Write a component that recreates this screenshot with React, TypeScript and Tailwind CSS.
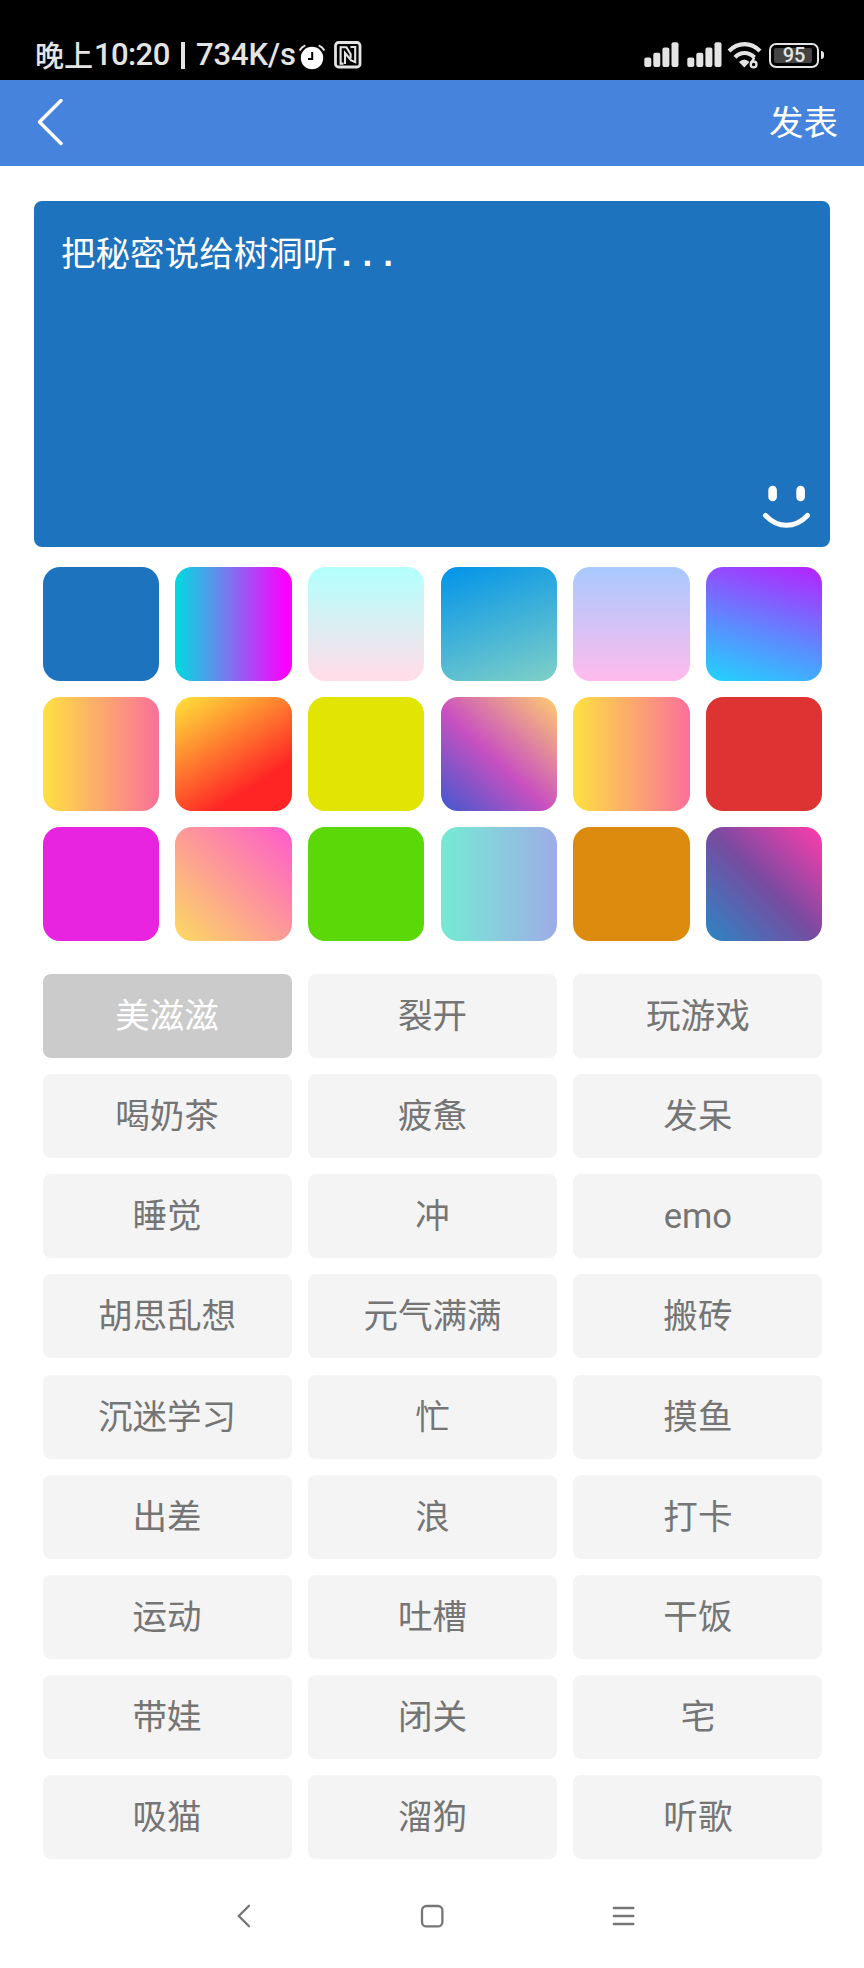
const SWATCHES = [
  "bg-[#1e73be]",
  "bg-[linear-gradient(90deg,#00dbde_0%,#5894ea_33%,#fc00ff_95%)]",
  "bg-[linear-gradient(180deg,#b5fffc_5%,#ffdee9_95%)]",
  "bg-[linear-gradient(160deg,#0093e9_0%,#80d0c7_100%)]",
  "bg-[linear-gradient(180deg,#a9c9ff_0%,#ffbbec_100%)]",
  "bg-[linear-gradient(17deg,#21d4fd_0%,#5b8cff_42%,#b721ff_100%)]",
  "bg-[linear-gradient(90deg,#fee140_0%,#fa709a_100%)]",
  "bg-[linear-gradient(147deg,#ffe53b_0%,#ff2525_74%)]",
  "bg-[#e2e402]",
  "bg-[linear-gradient(43deg,#4158d0_0%,#c850c0_46%,#ffcc70_100%)]",
  "bg-[linear-gradient(90deg,#fee140_0%,#fa709a_100%)]",
  "bg-[#de3333]",
  "bg-[#e924e1]",
  "bg-[linear-gradient(225deg,#ff5acd_0%,#fbda61_100%)]",
  "bg-[#5bd808]",
  "bg-[linear-gradient(90deg,#74ebd5_0%,#9face6_100%)]",
  "bg-[#dc8b0e]",
  "bg-[linear-gradient(225deg,#ff3cac_0%,#784ba0_50%,#2b86c5_100%)]",
];

const TAGS = [
  "美滋滋", "裂开", "玩游戏",
  "喝奶茶", "疲惫", "发呆",
  "睡觉", "冲", "emo",
  "胡思乱想", "元气满满", "搬砖",
  "沉迷学习", "忙", "摸鱼",
  "出差", "浪", "打卡",
  "运动", "吐槽", "干饭",
  "带娃", "闭关", "宅",
  "吸猫", "溜狗", "听歌",
];

function Signal() {
  return (
    <svg className="h-[26px] w-[36px]" viewBox="0 0 36 26" fill="#e4e4e4">
      <rect x="0.3" y="15.5" width="7" height="9.5" rx="2" />
      <rect x="9.3" y="10.8" width="7" height="14.2" rx="2" />
      <rect x="18.4" y="5.6" width="7" height="19.4" rx="2" />
      <rect x="27.5" y="0.3" width="7" height="24.7" rx="2" />
    </svg>
  );
}

function StatusBar() {
  return (
    <div className="flex h-20 items-start justify-between bg-black pt-[40px] pr-[40px] pl-[35px] text-[#e4e4e4]">
      <div className="flex h-[30px] items-center whitespace-pre leading-[30px]">
        <span className="w-[59px] pb-[2px] font-['Noto_Sans_CJK_SC',sans-serif] text-[29px] leading-[28px] font-medium">晚上</span>
        <span className="w-[87px] font-[Roboto,sans-serif] text-[31px] font-medium tracking-[-0.6px]">10:20</span>
        <span className="mr-[11.5px] h-[27px] w-[3.5px] bg-[#e4e4e4]" />
        <span className="w-[103px] font-[Roboto,sans-serif] text-[31px] font-medium tracking-[-0.1px]">734K/s</span>
        <svg className="mt-[3px] h-[26px] w-[26px]" viewBox="0 0 26 26" fill="none">
          <circle cx="13" cy="14" r="11.2" fill="#fff" />
          <path d="M1.2 5.8Q2.6 3 5.5 1.8M20.5 1.8Q23.4 3 24.8 5.8" stroke="#e4e4e4" strokeWidth="2" strokeLinecap="round" />
          <path d="M13.2 8v7H9" stroke="#000" strokeWidth="2" />
        </svg>
        <svg className="ml-[9px] h-[28px] w-[28px]" viewBox="0 0 28 28" fill="none" stroke="#e4e4e4">
          <rect x="1.5" y="1.5" width="24.5" height="24.5" rx="3" strokeWidth="2.8" />
          <path d="M9.5 22.6H6.6V6.2H12.4L16.6 13V17.2" strokeWidth="2.1" />
          <path d="M16.5 6H21.2V21.2L17.2 19.5L11 12V23" strokeWidth="2.1" />
        </svg>
      </div>
      <div className="flex h-[30px] items-center">
        <Signal />
        <span className="w-[7px]" />
        <Signal />
        <svg className="ml-[4px] h-[30px] w-[36px]" viewBox="0 0 36 30" fill="none" stroke="#e4e4e4">
          <path d="M2 11Q9 4.2 17.5 4.2Q26 4.2 33 11" strokeWidth="4.2" />
          <path d="M8 17.4Q12 13 17.5 13Q23 13 27.5 17.4" strokeWidth="4.2" />
          <path d="M12 22Q17.3 17 22.5 22L17.3 27.4Z" fill="#e4e4e4" stroke="none" />
          <circle cx="26.6" cy="24.4" r="4.8" fill="#000" stroke="none" />
          <circle cx="26.6" cy="24.4" r="2.9" strokeWidth="2.3" />
          <path d="M23.9 23.2L27.4 17.6" strokeWidth="2.3" />
        </svg>
        <div className="ml-[6px] flex h-[25px] w-[50px] items-center justify-center rounded-[7px] border-2 border-[#e4e4e4] p-[3px]">
          <div className="relative flex h-[15px] w-full items-center justify-center">
            <div className="absolute inset-y-0 left-0 w-[38px] rounded-[2px] bg-[#444]" />
            <span className="relative font-[Roboto,sans-serif] text-[20px] leading-none font-medium">95</span>
          </div>
        </div>
        <span className="ml-[2px] h-2 w-[3px] rounded-r bg-[#e4e4e4]" />
      </div>
    </div>
  );
}

export default function App() {
  return (
    <div className="flex h-[1968px] w-[864px] flex-col bg-white font-[Roboto,'Noto_Sans_CJK_SC',sans-serif] text-[34.56px]">
      <StatusBar />
      <header className="flex h-[86px] items-center justify-between bg-[#4583dc] pr-[26px] pl-[36px] text-white">
        <svg className="h-[48px] w-[28px]" viewBox="0 0 28 48" fill="none" stroke="#fff" strokeWidth="3.4" strokeLinecap="round" strokeLinejoin="round">
          <path d="M25 1.5L3.5 23L25 44.5" />
        </svg>
        <button className="leading-[50px]">发表</button>
      </header>

      <main className="flex flex-col pr-[33.4px] pl-[34.4px] pt-[35px]">
        <section className="flex h-[346px] w-[796px] flex-col justify-between rounded-[8px] bg-[#1e73be] pt-[27px] pr-[20px] pb-[18px] pl-[26.6px] text-white">
          <p className="font-['DejaVu_Sans_Mono','Noto_Sans_CJK_SC',monospace] leading-[52px] whitespace-nowrap">
            把秘密说给树洞听<span className="relative -left-px font-['Liberation_Mono',monospace] font-bold">...</span>
          </p>
          <svg className="h-[46px] w-[48px] self-end" viewBox="0 0 48 46" fill="none">
            <rect x="6.3" y="2.7" width="8.6" height="15.6" rx="4.3" fill="#fff" />
            <rect x="34.3" y="2.7" width="8.6" height="15.6" rx="4.3" fill="#fff" />
            <path d="M3.5 32.5Q13 42.3 24.4 42.3Q36 42.3 45.5 32.5" stroke="#fff" strokeWidth="5" strokeLinecap="round" />
          </svg>
        </section>

        <section className="mx-[8.2px] mt-[20px] grid grid-cols-6 gap-[16.4px]">
          {SWATCHES.map((fill, i) => (
            <div key={i} className={`h-[113.6px] rounded-[17px] ${fill}`} />
          ))}
        </section>

        <section className="mx-[8.2px] mt-[33.2px] grid grid-cols-3 gap-x-[16.4px] gap-y-[16.2px]">
          {TAGS.map((tag, i) => (
            <button
              key={tag}
              className={`flex h-[84px] items-center justify-center rounded-[8px] leading-[50px] ${
                i === 0 ? "bg-[#cbcbcb] text-white" : "bg-[#f4f4f4] text-[#757575]"
              }`}
            >
              {tag}
            </button>
          ))}
        </section>
      </main>

      <nav className="mt-[44.5px] flex items-center justify-between pr-[228px] pl-[235.5px]">
        <svg className="h-6 w-4" viewBox="0 0 16 24" fill="none" stroke="#757575" strokeWidth="2.3" strokeLinecap="round">
          <path d="M13 1.8L2.8 12L13 22.2" />
        </svg>
        <svg className="h-6 w-6" viewBox="0 0 24 24" fill="none" stroke="#757575" strokeWidth="2.3">
          <rect x="2" y="2" width="20.4" height="20.4" rx="4.5" />
        </svg>
        <svg className="h-6 w-6" viewBox="0 0 24 24" fill="none" stroke="#757575" strokeWidth="2.3" strokeLinecap="round">
          <path d="M1.8 4H21.4M1.8 12H21.4M1.8 20H21.4" />
        </svg>
      </nav>
    </div>
  );
}
